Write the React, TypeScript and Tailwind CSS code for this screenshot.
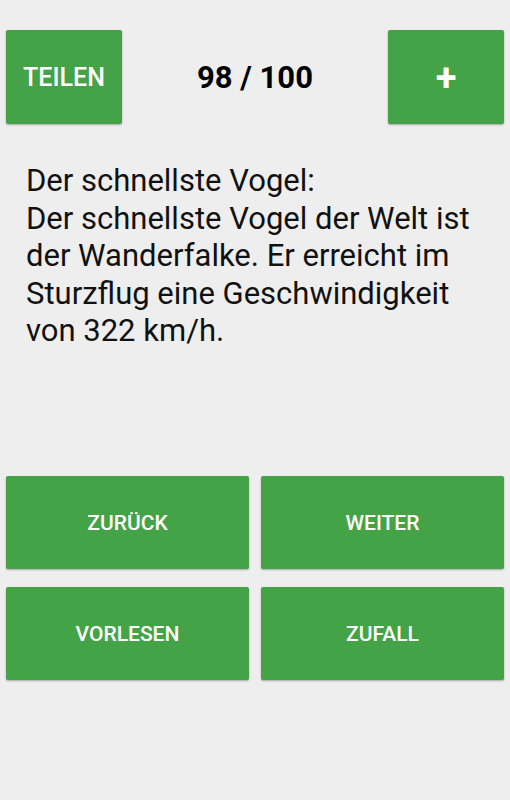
export default function App() {
  const green = 'bg-[#43a346] shadow-[0_1px_2px_rgba(0,0,0,0.3)] rounded-[2px] text-white flex items-center justify-center';
  return (
    <div className="w-[510px] h-[800px] bg-[#eeeeee] px-[6px] pt-[30px] font-['Roboto',sans-serif]">
      <div className="flex items-center justify-between h-[94px]">
        <div className={`${green} w-[116px] h-[94px] text-[25px] font-medium pt-[2px]`}>TEILEN</div>
        <div className="text-[31px] font-bold text-black pt-[2px]">98 / 100</div>
        <div className={`${green} w-[116px] h-[94px] text-[38px] font-bold pt-[2px]`}>+</div>
      </div>
      <div className="h-[352px] pt-[38px] px-[20px] text-[31px] leading-[37.5px] text-[#111]">
        Der schnellste Vogel:
        <br />
        Der schnellste Vogel der Welt ist der Wanderfalke. Er erreicht im Sturzflug eine Geschwindigkeit von 322 km/h.
      </div>
      <div className="grid grid-cols-2 gap-x-[12px] gap-y-[18px]">
        {['ZURÜCK', 'WEITER', 'VORLESEN', 'ZUFALL'].map((t) => (
          <div key={t} className={`${green} h-[93px] text-[21px] font-medium pt-[2px]`}>
            {t}
          </div>
        ))}
      </div>
    </div>
  );
}
